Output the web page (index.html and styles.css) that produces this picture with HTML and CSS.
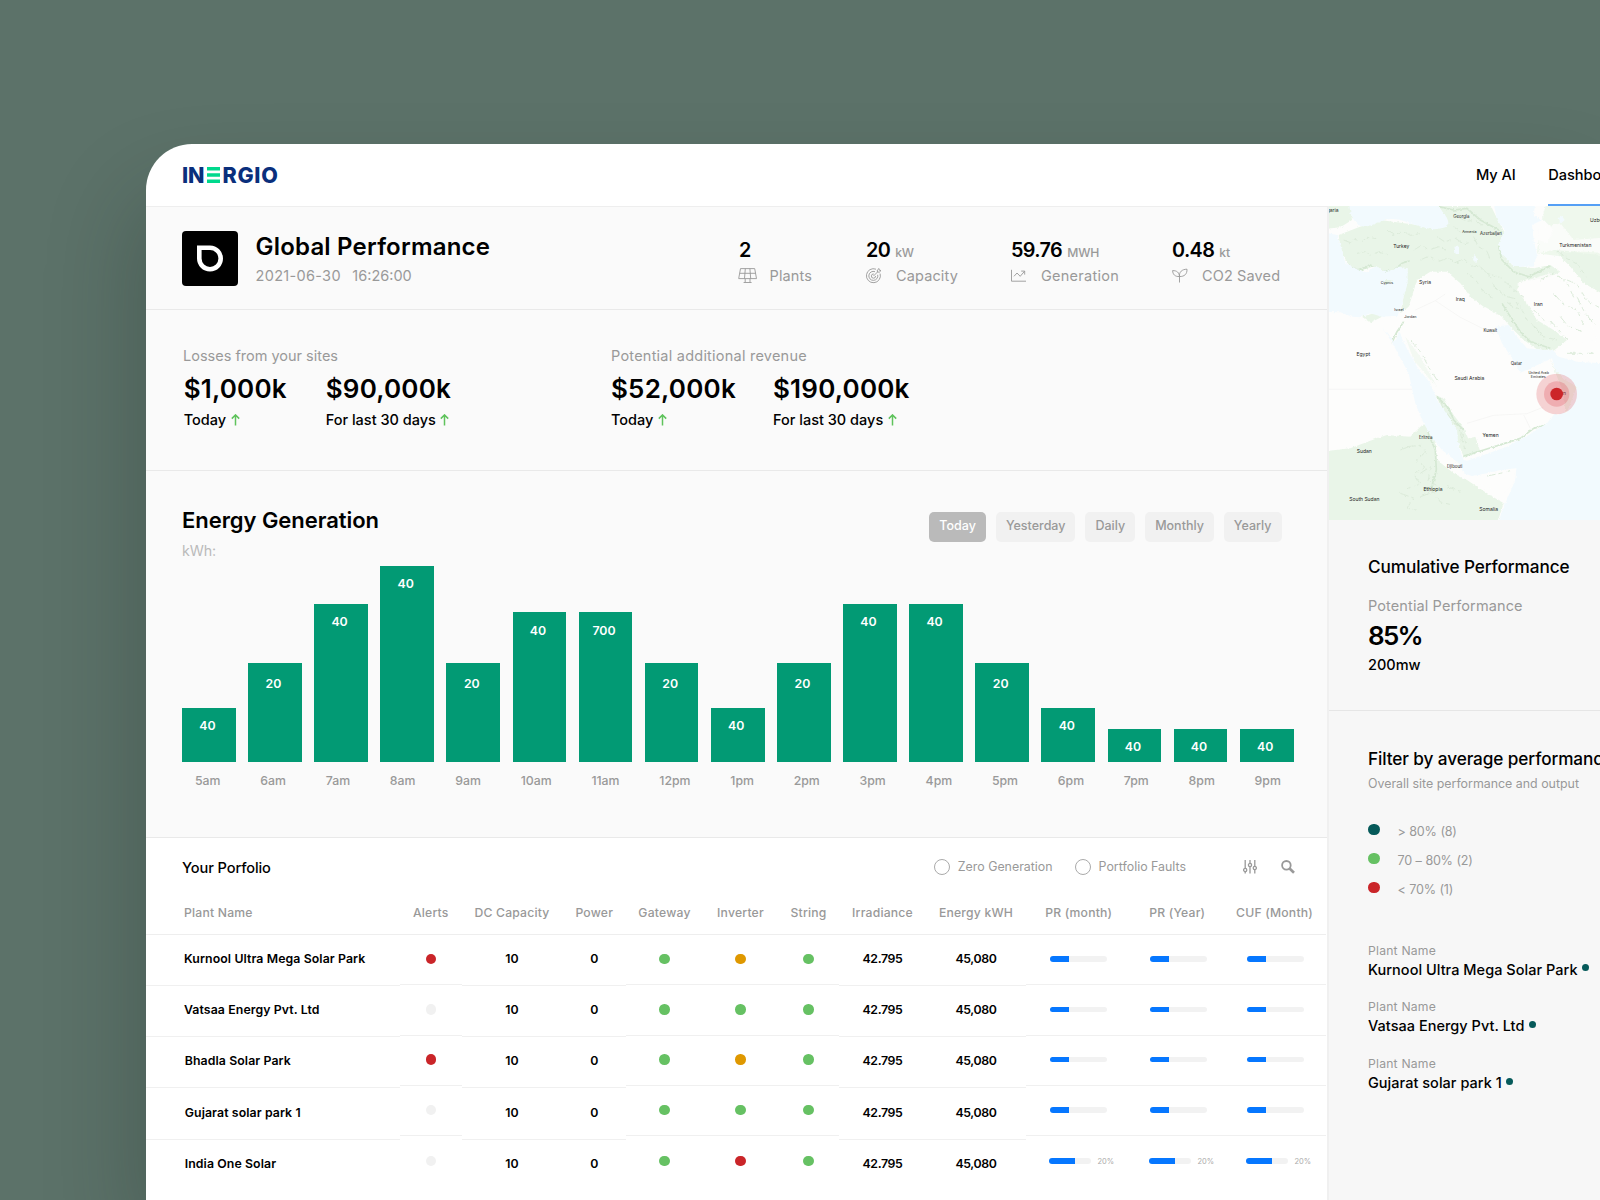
FILE: index.html
```html
<!DOCTYPE html>
<html lang="en">
<head>
<meta charset="utf-8">
<title>Inergio – Dashboard</title>
<link rel="stylesheet" href="styles.css">
</head>
<body>
<div class="window">
  <header class="topbar">
    <div class="logo" aria-label="Inergio"><span class="logo-in">IN</span><svg class="logo-e" width="13" height="16" viewBox="0 0 13 16"><path d="M0 0h13v3.6H0zM0 6.2h13v3.6H0zM0 12.4h13V16H0z" fill="#00d98d"/></svg><span class="logo-rgio">RGIO</span></div>
    <nav class="nav">
      <a class="nav-link">My AI</a>
      <a class="nav-link active">Dashboard</a>
    </nav>
  </header>
  <div class="content">
    <main class="main">
      <section class="hero">
        <div class="app-icon"><svg width="56" height="56" viewBox="0 0 56 56"><path d="M17.3 16.8H28a10.7 10.7 0 1 1-10.7 10.7z" fill="none" stroke="#fff" stroke-width="4.6"/></svg></div>
        <div class="hero-title">
          <h1>Global Performance</h1>
          <p class="stamp"><span class="date">2021-06-30</span><span>16:26:00</span></p>
        </div>
        <div class="stats">
          <div class="stat">
            <p class="stat-value"><b>2</b></p>
            <p class="stat-label"><svg width="20" height="16" viewBox="0 0 20 16"><path d="M2.5.6h14.2l1.8 10H.7zM1.7 5.3h15.9M7.3.6l-.8 10M11.9.6l.8 10M7.2 10.8v3.5M12 10.8v3.5M5.6 14.5h8"/></svg><span>Plants</span></p>
          </div>
          <div class="stat">
            <p class="stat-value"><b>20</b><i>kW</i></p>
            <p class="stat-label"><svg width="16" height="16" viewBox="0 0 16 16"><path d="M10 1.2A7 7 0 1 0 14.1 5.6M9 3.7A4.5 4.5 0 1 0 11.7 6.8M7.8 6A2.1 2.1 0 1 0 9.6 8M7.5 8l4-4M11.5 4l-.2-1.900L13 .5l.3 1.700 1.700.3-1.700 1.700z"/></svg><span>Capacity</span></p>
          </div>
          <div class="stat">
            <p class="stat-value"><b>59.76</b><i>MWH</i></p>
            <p class="stat-label"><svg width="16" height="16" viewBox="0 0 16 16"><path d="M.5 1.8v11.4h14.5M3 8.3l3-3.300 3.200 3.300L13.500 3.300M10.200 3.100h3.500v3.500"/></svg><span class="wide">Generation</span></p>
          </div>
          <div class="stat">
            <p class="stat-value"><b>0.48</b><i>kt</i></p>
            <p class="stat-label"><svg width="16" height="16" viewBox="0 0 16 16"><path d="M7.5 14.5V8.5C3 8.8.8 6.5.6 2.6 4.8 2.5 7.3 4.5 7.5 8.5 7 4 10 1.2 15 1.2 15.2 6 12.5 8.7 7.5 8.5"/></svg><span>CO2 Saved</span></p>
          </div>
        </div>
      </section>

      <section class="money">
        <div class="money-group g1">
          <p class="muted">Losses from your sites</p>
          <div class="money-row">
            <div><p class="amount">$1,000k</p><p class="when">Today<svg width="9" height="12" viewBox="0 0 9 12"><path d="M4.500 11.500V1M.8 4.600 4.500.9l3.700 3.700"/></svg></p></div>
            <div><p class="amount">$90,000k</p><p class="when">For last 30 days<svg width="9" height="12" viewBox="0 0 9 12"><path d="M4.500 11.500V1M.8 4.600 4.500.9l3.700 3.700"/></svg></p></div>
          </div>
        </div>
        <div class="money-group g2">
          <p class="muted wide">Potential additional revenue</p>
          <div class="money-row">
            <div><p class="amount">$52,000k</p><p class="when">Today<svg width="9" height="12" viewBox="0 0 9 12"><path d="M4.500 11.500V1M.8 4.600 4.500.9l3.700 3.700"/></svg></p></div>
            <div><p class="amount">$190,000k</p><p class="when">For last 30 days<svg width="9" height="12" viewBox="0 0 9 12"><path d="M4.500 11.500V1M.8 4.600 4.500.9l3.700 3.700"/></svg></p></div>
          </div>
        </div>
      </section>

      <section class="energy">
        <div class="energy-head">
          <div>
            <h2>Energy Generation</h2>
            <p class="unit">kWh:</p>
          </div>
          <div class="tabs">
            <button class="tab on">Today</button>
            <button class="tab">Yesterday</button>
            <button class="tab">Daily</button>
            <button class="tab">Monthly</button>
            <button class="tab">Yearly</button>
          </div>
        </div>
        <div class="bars">
          <div class="bar h1"><span>40</span></div>
          <div class="bar h2"><span>20</span></div>
          <div class="bar h4"><span>40</span></div>
          <div class="bar h5"><span>40</span></div>
          <div class="bar h2"><span>20</span></div>
          <div class="bar h3"><span>40</span></div>
          <div class="bar h3"><span>700</span></div>
          <div class="bar h2"><span>20</span></div>
          <div class="bar h1"><span>40</span></div>
          <div class="bar h2"><span>20</span></div>
          <div class="bar h4"><span>40</span></div>
          <div class="bar h4"><span>40</span></div>
          <div class="bar h2"><span>20</span></div>
          <div class="bar h1"><span>40</span></div>
          <div class="bar h0"><span>40</span></div>
          <div class="bar h0"><span>40</span></div>
          <div class="bar h0"><span>40</span></div>
        </div>
        <div class="hours"><span>5am</span><span>6am</span><span>7am</span><span>8am</span><span>9am</span><span>10am</span><span>11am</span><span>12pm</span><span>1pm</span><span>2pm</span><span>3pm</span><span>4pm</span><span>5pm</span><span>6pm</span><span>7pm</span><span>8pm</span><span>9pm</span></div>
      </section>

      <section class="portfolio">
        <div class="toolbar">
          <h3>Your Porfolio</h3>
          <div class="tools">
            <label class="radio r1"><i></i>Zero Generation</label>
            <label class="radio r2"><i></i>Portfolio Faults</label>
            <svg class="sliders" width="14" height="14" viewBox="0 0 14 14"><path d="M2.200 0v8M2.200 12v1.500M7 0v3M7 7v6.500M11.800 0v6M11.800 10v3.500"/><circle cx="2.200" cy="10" r="1.600"/><circle cx="7" cy="5" r="1.600"/><circle cx="11.800" cy="8" r="1.600"/></svg>
            <svg class="search" width="14" height="14" viewBox="0 0 14 14"><circle cx="5.400" cy="5.300" r="4.300"/><path class="handle" d="M8.600 8.500l4.400 4.300"/></svg>
          </div>
        </div>
        <div class="table">
          <div class="col c-name"><div class="th">Plant Name</div><div class="td">Kurnool Ultra Mega Solar Park</div><div class="td">Vatsaa Energy Pvt. Ltd</div><div class="td n1">Bhadla Solar Park</div><div class="td n1">Gujarat solar park 1</div><div class="td n1">India One Solar</div></div>
          <div class="col short c-alerts"><div class="th">Alerts</div><div class="td"><i class="dot red"></i></div><div class="td"><i class="dot off"></i></div><div class="td"><i class="dot red"></i></div><div class="td"><i class="dot off"></i></div><div class="td"><i class="dot off"></i></div></div>
          <div class="col c-dc"><div class="th">DC Capacity</div><div class="td">10</div><div class="td">10</div><div class="td">10</div><div class="td">10</div><div class="td">10</div></div>
          <div class="col c-power"><div class="th">Power</div><div class="td">0</div><div class="td">0</div><div class="td">0</div><div class="td">0</div><div class="td">0</div></div>
          <div class="col short c-gateway"><div class="th">Gateway</div><div class="td"><i class="dot green"></i></div><div class="td"><i class="dot green"></i></div><div class="td"><i class="dot green"></i></div><div class="td"><i class="dot green"></i></div><div class="td"><i class="dot green"></i></div></div>
          <div class="col short c-inverter"><div class="th">Inverter</div><div class="td"><i class="dot amber"></i></div><div class="td"><i class="dot green"></i></div><div class="td"><i class="dot amber"></i></div><div class="td"><i class="dot green"></i></div><div class="td"><i class="dot red"></i></div></div>
          <div class="col short c-string"><div class="th">String</div><div class="td"><i class="dot green"></i></div><div class="td"><i class="dot green"></i></div><div class="td"><i class="dot green"></i></div><div class="td"><i class="dot green"></i></div><div class="td"><i class="dot green"></i></div></div>
          <div class="col num c-irr"><div class="th">Irradiance</div><div class="td">42.795</div><div class="td">42.795</div><div class="td">42.795</div><div class="td">42.795</div><div class="td">42.795</div></div>
          <div class="col num c-kwh"><div class="th">Energy kWH</div><div class="td">45,080</div><div class="td">45,080</div><div class="td">45,080</div><div class="td">45,080</div><div class="td">45,080</div></div>
          <div class="col short c-prm"><div class="th">PR (month)</div><div class="td"><i class="meter"></i></div><div class="td"><i class="meter"></i></div><div class="td"><i class="meter"></i></div><div class="td"><i class="meter"></i></div><div class="td"><i class="meter small"></i><em>20%</em></div></div>
          <div class="col short c-pry"><div class="th">PR (Year)</div><div class="td"><i class="meter"></i></div><div class="td"><i class="meter"></i></div><div class="td"><i class="meter"></i></div><div class="td"><i class="meter"></i></div><div class="td"><i class="meter small"></i><em>20%</em></div></div>
          <div class="col short c-cuf"><div class="th">CUF (Month)</div><div class="td"><i class="meter"></i></div><div class="td"><i class="meter"></i></div><div class="td"><i class="meter"></i></div><div class="td"><i class="meter"></i></div><div class="td"><i class="meter small"></i><em>20%</em></div></div>
        </div>
      </section>
    </main>

    <aside class="side">
      <svg class="map" width="271" height="314" viewBox="26 198 813 942">
        <defs><filter id="rough" x="0" y="0" width="1" height="1"><feTurbulence type="fractalNoise" baseFrequency=".12" numOctaves="3" seed="4" result="n"/><feDisplacementMap in="SourceGraphic" in2="n" scale="9" xChannelSelector="R" yChannelSelector="G"/></filter></defs>
        <rect x="26" y="198" width="814" height="942" fill="#fdfdfc"/>
        <g filter="url(#rough)">
        <rect x="0" y="150" width="900" height="1040" fill="#fdfdfc"/>
        <g fill="#e9f5e8">
          <path d="M0 150H85L95 240 60 262 0 268z"/>
          <path d="M55 285 115 262 180 240 340 262 384 246 355 198 512 198 535 245 552 275 540 320 575 375 640 385 690 375 720 395 690 410 640 420 600 425 590 450 620 490 650 540 700 570 740 600 700 632 650 628 610 600 570 560 545 530 490 500 450 470 420 430 380 395 330 395 290 420 265 500 240 520 255 440 262 385 200 395 165 378 120 392 80 368 60 325z"/>
          <path d="M690 150H880V470L800 420 770 385 730 350 650 340 655 300 680 310 700 270 665 235z" opacity=".75"/>
          <path d="M700 330 790 340 880 350V480L790 430 750 380z"/>
          <path d="M0 935 90 925 170 895 200 885 270 890 300 860 320 850 345 900 350 960 400 1000 440 1020 500 1060 550 1090 520 1180H0z"/>
          <path d="M345 765 370 775 400 825 430 865 450 910 430 950 410 900 385 840z"/>
          <path d="M425 900 465 890 480 935 430 955z"/>
          <path d="M125 530 160 520 185 530 150 548z"/>
          <path d="M688 655 705 690 770 740 765 800 735 815 730 760z" opacity=".8"/>
          <path d="M255 590 300 650 350 740 330 720 280 660z" opacity=".5"/>
        </g>
        <g fill="#fdfdfc" opacity=".8"><path d="M590 430 690 400 750 440 800 520 830 600 770 610 720 560 650 540 615 480z"/><path d="M655 265 720 250 760 300 880 290 880 340 700 330 655 340z"/><path d="M440 1010 500 995 585 990 580 1030 550 1060 500 1040z"/></g>
        <g fill="none" stroke="#d5e8d3" stroke-width="5" stroke-linejoin="round">
          <path d="M85 375 115 392 150 375 185 392 215 395 245 370 268 362"/>
          <path d="M355 200 400 210 440 205 480 240 520 262 545 275"/>
          <path d="M535 320 545 360 580 395 625 410 690 378"/>
          <path d="M545 490 570 530 600 575 630 605 690 625"/>
          <path d="M350 770 385 805 400 840 430 870"/>
          <path d="M430 948 490 930 560 908 600 895 640 865 675 855"/>
          <path d="M320 850 325 885 345 930 348 990 335 1040 310 1050"/>
          <path d="M215 607 230 575 250 545"/>
        </g>
        <g fill="none" stroke="#dcebda" stroke-width="3" stroke-linejoin="round" stroke-dasharray="26 9 12 14">
          <path d="M70 300l20 8 12-10 24 6 14-12 30 4M110 340l28-6 10 12 26-10 28 8M200 270l20 14 30-10 20 12 34-6M280 330l24-14 22 14 30-10 26 14M350 290l24 16 30-12 26 18 24-6M300 360l26-12 30 16 26-10 34 16M400 370l30-14 24 22 28 2M460 290l14 30 26 14 12 30M440 400l26 20 20 32 34 24M480 380l30 30 14 34 34 26M520 440l30 20 20 36 36 14M500 400l44 14 30 30 40 30M600 500l20 40 34 30 16 30M640 510l34 34 24 6 44 50M660 420l40-22 40 30 20 44M700 460l30 34 40 16 20 44M770 470l24 50 30 34M740 420l30 12 30 50 36 20M710 330l30 26 30 16 30 40M640 560l30 30 40 10M560 470l24 6 10 24M720 530l24 30 40 14M740 640h80M410 230l30 14 24-4 30 22M400 260l20 16 34-4"/>
          <path d="M260 920l40-4 16 20-28 24 26 22-34 20 20 30-40 14M240 1060l40 14-20 30 40 10M300 1000l30-20-6 40 30 20-40 24M270 600l34 40 20 40 26 40M360 780l20 60 40 40 14 50M380 820l44 60 20 40M300 1070l40-14 20 30 40 10M240 930l30-12M380 1040l40 14M500 1008l40-8 30-8"/>
        </g>
        <g fill="#f2fafe">
          <path d="M85 150C85 225 95 240 120 258 150 265 180 240 210 237 250 236 290 262 340 268 370 266 385 262 384 248 382 228 365 215 352 198V150z"/>
          <path d="M0 275 50 285 62 320 75 368 118 392 140 397 165 378 200 395 235 380 262 385 262 430 245 490 232 527 185 530 150 520 120 532 95 530 60 517 0 516z"/>
          <path d="M185 562 222 607 238 575 250 608 290 680 330 730 350 780 385 830 410 870 415 920 430 960 440 962 560 920 625 885 680 850 700 825 740 815 770 740 735 720 705 690 695 655 640 680 600 698 575 655 545 610 525 560 565 555 590 590 620 625 700 632 715 650 770 665 880 672V1180H520L555 1090 585 1020 588 985 540 990 500 1000 455 1008 430 1000 415 970 365 930 330 885 305 840 285 790 265 700 235 645 215 607z"/>
          <path d="M512 150 530 240 555 270 535 310 545 345 580 378 640 380 650 345 640 300 635 255 665 240 640 225 650 150z"/>
          <path d="M715 235 725 228 733 240 722 250zM402 320h14v22h-10zM462 345 472 355 468 370 458 360z"/>
        </g>
        <path d="M190 420 215 420 205 432 192 430z" fill="#e9f5e8"/>
        </g>
        <path d="M26 748H275M285 510l60-28 30-20M345 482l75 50 100 50M440 850l80-24 100-5 50-20M610 825l20 40" fill="none" stroke="#f3f3f1" stroke-width="2"/>
        <g class="map-labels">
          <text x="37" y="217">garia</text><text class="m" x="423" y="235">Georgia</text><text class="s" x="447" y="279">Armenia</text><text class="m" x="512" y="285">Azerbaijan</text><text x="832" y="247">Uzbek</text><text x="243" y="324">Turkey</text><text x="765" y="321">Turkmenistan</text><text class="s" x="200" y="431">Cyprus</text><text x="314" y="433">Syria</text><text x="420" y="484">Iraq</text><text x="654" y="497">Iran</text><text class="s" x="236" y="513">Israel</text><text class="s" x="270" y="535">Jordan</text><text class="m" x="510" y="577">Kuwait</text><text x="129" y="648">Egypt</text><text class="m" x="588" y="675">Qatar</text><text class="s" x="655" y="703">United Arab</text><text class="s" x="654" y="714">Emirates</text><text x="447" y="721">Saudi Arabia</text><text x="716" y="766">Oman</text><text class="m" x="316" y="896">Eritrea</text><text x="511" y="891">Yemen</text><text x="132" y="938">Sudan</text><text class="m" x="403" y="983">Djibouti</text><text x="338" y="1053">Ethiopia</text><text x="132" y="1082">South Sudan</text><text x="505" y="1114">Somalia</text>
        </g>
        <circle cx="709" cy="762" r="61" fill="#dc3c46" opacity=".22"/>
        <circle cx="709" cy="762" r="38" fill="#dc3c46" opacity=".24"/>
        <circle cx="709" cy="762" r="19" fill="#cc2529"/>
      </svg>
      <section class="cumulative">
        <h4>Cumulative Performance</h4>
        <p class="muted">Potential Performance</p>
        <p class="amount">85%</p>
        <p class="when">200mw</p>
      </section>
      <section class="filter">
        <h4>Filter by average performance</h4>
        <p class="sub">Overall site performance and output</p>
        <ul class="legend">
          <li><i class="teal"></i>&gt; 80% (8)</li>
          <li><i class="green"></i>70 – 80% (2)</li>
          <li><i class="red"></i>&lt; 70% (1)</li>
        </ul>
        <ul class="plants">
          <li><small>Plant Name</small><p>Kurnool Ultra Mega Solar Park<i></i></p></li>
          <li><small>Plant Name</small><p>Vatsaa Energy Pvt. Ltd<i></i></p></li>
          <li><small>Plant Name</small><p>Gujarat solar park 1<i></i></p></li>
        </ul>
      </section>
    </aside>
  </div>
</div>
</body>
</html>
```
FILE: styles.css
```css
* { box-sizing: border-box; margin: 0; padding: 0; }
html, body { width: 1600px; height: 1200px; overflow: hidden; }
body { background: #5c7269; font-family: Inter, "Liberation Sans", sans-serif; color: #000; }
i, em { font-style: normal; }
ul { list-style: none; }
svg { display: block; flex: none; }

.window { margin: 144px 0 0 146px; width: 1454px; height: 1056px; background: #fff; border-top-left-radius: 46px; box-shadow: -12px 50px 90px rgba(20, 35, 30, .24); display: flex; flex-direction: column; }

/* Top bar */
.topbar { height: 62px; flex: none; display: flex; align-items: stretch; padding-left: 36px; }
.logo { display: flex; align-items: center; height: 62px; font-weight: 800; font-size: 21.5px; line-height: 24px; color: #0a2f7c; }
.logo-in { letter-spacing: -.1px; }
.logo-rgio { letter-spacing: .75px; }
.logo-e { margin: 0 2.5px 0 2.5px; }
.nav { margin-left: auto; width: 124px; display: flex; gap: 32.5px; overflow: hidden; }
.nav-link { flex: none; font-size: 14.6px; font-weight: 500; letter-spacing: -.05px; line-height: 63px; height: 62px; white-space: nowrap; }
.nav-link.active { line-height: 62px; border-bottom: 2px solid #559ff5; }

.content { flex: 1; display: flex; min-height: 0; }
.main { width: 1183px; flex: none; border-right: 2px solid #f0f0f0; border-top: 1px solid #eee; }

/* Hero */
.hero { height: 103px; background: #fafafa; border-bottom: 1px solid #e9e9e9; padding: 24px 0 0 36px; display: flex; align-items: flex-start; }
.app-icon { width: 56px; height: 55px; border-radius: 4px; background: #000; flex: none; }
.hero-title { width: 500px; padding: 1px 0 0 17.5px; flex: none; }
h1 { font-size: 24px; font-weight: 600; line-height: 30px; letter-spacing: .2px; }
.stamp { display: flex; gap: 11.5px; font-size: 14.5px; line-height: 28px; color: #999; }
.date { letter-spacing: .32px; }
.stats { display: grid; grid-template-columns: 128px 145px 161px auto; padding-top: 6px; }
.stat-value { display: flex; align-items: baseline; gap: 5px; line-height: 26px; height: 26px; }
.stat-value b { font-size: 19.8px; font-weight: 600; letter-spacing: -.6px; }
.stat:first-child .stat-value { padding-left: 1px; }
.stat-value i { font-size: 12.2px; font-weight: 500; letter-spacing: -.15px; color: #999; }
.stat-label { display: flex; align-items: center; gap: 14px; font-size: 14.5px; line-height: 25px; height: 25px; letter-spacing: .13px; color: #999; }
.stat-label .wide { letter-spacing: .26px; }
.stat:first-child .stat-label { gap: 11.5px; }
.stat-label svg { fill: none; stroke: #999; stroke-width: .9; }

/* Losses and revenue */
.money { height: 161px; background: #fafafa; border-bottom: 1px solid #e9e9e9; padding: 36px 0 0 37px; display: flex; }
.money-group { width: 428px; }
.muted { font-size: 14.5px; line-height: 20px; color: #999; }
.muted.wide { letter-spacing: .23px; }
.money-row { display: flex; margin-top: 5px; }
.g1 .money-row { padding-left: .7px; }
.g1 .money-row > div { width: 142px; }
.g2 .money-row > div { width: 162px; }
.amount { font-size: 26px; font-weight: 600; line-height: 36px; letter-spacing: .2px; white-space: nowrap; }
.when { display: flex; align-items: center; gap: 4.5px; margin-top: 2.5px; font-size: 14.5px; font-weight: 500; line-height: 20px; white-space: nowrap; }
.when svg { fill: none; stroke: #5fc35c; stroke-width: 1.5; }

/* Energy chart */
.energy { height: 367px; background: #fafafa; border-bottom: 1px solid #e9e9e9; padding: 34px 33.5px 0 36px; }
.energy-head { display: flex; justify-content: space-between; height: 61px; }
h2 { font-size: 22px; font-weight: 600; line-height: 30px; letter-spacing: -.05px; }
.unit { margin-top: 6px; font-size: 14.3px; line-height: 20px; letter-spacing: -.15px; color: #bbb; }
.tabs { display: flex; gap: 10px; margin: 7px 12px 0 0; height: 30px; }
.tab { border: 0; border-radius: 5px; padding: 0 10px 3px; background: #f1f1f1; color: #999; font: 500 12.5px/27px Inter, sans-serif; }
.tab.on { background: #bababa; color: #fff; }
.bars { display: grid; grid-template-columns: repeat(17, 1fr); column-gap: 12.4px; align-items: end; height: 196px; }
.bar { background: #029a74; color: #fff; text-align: center; font-size: 12.3px; font-weight: 600; line-height: 16px; padding: 10px 3px 0 0; }
.h0 { height: 33px; } .h1 { height: 54px; } .h2 { height: 99px; padding-top: 13px; } .h3 { height: 150px; padding-top: 11px; } .h4 { height: 158px; } .h5 { height: 196px; }
.hours { display: flex; justify-content: space-between; margin: 9px 12.5px 0 13px; font-size: 12.3px; font-weight: 500; line-height: 20px; color: #999; }

/* Portfolio */
.portfolio { background: #fff; }
.toolbar { height: 60px; padding: 0 32px 0 36px; display: flex; justify-content: space-between; align-items: center; }
h3 { font-size: 14.6px; font-weight: 500; line-height: 20px; letter-spacing: -.1px; }
.tools { display: flex; align-items: center; height: 56px; margin-bottom: 3px; }
.radio { display: flex; align-items: center; gap: 8px; font-size: 12.4px; color: #999; white-space: nowrap; line-height: 16px; }
.radio i { width: 16px; height: 16px; border: 1px solid #aaa; border-radius: 50%; }
.radio.r1 { margin-right: 22px; }
.radio.r2 { margin-right: 57px; }
.sliders, .search { fill: none; stroke: #999; stroke-width: 1.3; }
.search { margin-left: 24px; stroke-width: 1.8; }
.handle { stroke-width: 2.6; }
.table { display: flex; width: 1180px; }
.col { flex: none; text-align: center; }
.th { height: 37px; padding-bottom: 6px; line-height: 30px; border-bottom: 1px solid #eee; font-size: 12.2px; font-weight: 500; letter-spacing: .2px; color: #999; white-space: nowrap; }
.td { height: 51.17px; padding-bottom: 3px; display: flex; align-items: center; justify-content: center; border-bottom: 1px solid #f0f0f0; font-size: 12.3px; font-weight: 600; letter-spacing: .1px; white-space: nowrap; }
.num .td { letter-spacing: -.35px; }
.short .td { height: 50.3px; padding-bottom: 1px; }
.td:last-child { border-bottom: 0; }
.c-name { width: 254px; text-align: left; }
.c-name .th { padding-left: 38px; }
.c-name .td { padding-left: 38px; justify-content: flex-start; }
.c-name .td.n1 { padding-left: 38.7px; }
.c-alerts { width: 61.5px; } .c-dc { width: 101px; } .c-power { width: 63.5px; } .c-gateway { width: 77px; } .c-inverter { width: 75px; } .c-string { width: 61px; } .c-irr { width: 87px; } .c-kwh { width: 100px; } .c-prm { width: 105.5px; } .c-pry { width: 91.5px; } .c-cuf { width: 103px; }
.dot { width: 10.5px; height: 10.5px; border-radius: 50%; }
.red { background: #ca2529; } .off { background: #f1f1f1; } .green { background: #66c163; } .amber { background: #df9800; } .teal { background: #065a5a; }
.meter { width: 57px; height: 5.5px; border-radius: 3px; background: linear-gradient(90deg, #0677ff 19px, #f2f2f2 19px); }
.meter.small { width: 42px; margin-left: -1px; background: linear-gradient(90deg, #0677ff 26px, #f2f2f2 26px); }
.short .td em { width: 15px; margin: 3px 0 0 7px; font-size: 7.5px; line-height: 8px; font-weight: 400; color: #aaa; letter-spacing: 0; }
.c-prm .td { padding-left: 23.5px; justify-content: flex-start; }
.c-pry .td { padding-left: 18px; justify-content: flex-start; }
.c-cuf .td { padding-left: 23.5px; justify-content: flex-start; }

/* Sidebar */
.side { flex: 1; background: #f7f7f7; overflow: hidden; white-space: nowrap; }
.map-labels text { font-size: 15px; text-anchor: middle; fill: #222; }
.map-labels .m { font-size: 13px; }
.map-labels .s { font-size: 11px; }
.cumulative { height: 190.5px; padding: 36px 0 0 39px; border-bottom: 1px solid #e6e6e6; }
h4 { font-size: 17.2px; font-weight: 500; line-height: 22px; letter-spacing: -.1px; }
.cumulative .muted { margin-top: 18px; letter-spacing: .11px; }
.cumulative .amount { margin-top: 2px; font-size: 26px; letter-spacing: -1.7px; }
.cumulative .when { margin-top: .5px; }
.filter { padding: 37px 0 0 39px; }
.sub { margin-top: 5px; font-size: 12.4px; line-height: 18px; color: #999; }
.legend { margin-top: 24px; }
.legend li { display: flex; align-items: center; height: 29px; font-size: 12.6px; letter-spacing: -.3px; word-spacing: .6px; color: #999; }
.legend i { width: 11.5px; height: 11.5px; border-radius: 50%; margin: 0 18px 3px 0; }
.plants { margin-top: 39.4px; }
.plants li { height: 56.6px; }
.plants small { display: block; font-size: 12.2px; line-height: 16px; letter-spacing: .2px; color: #999; }
.plants p { display: flex; align-items: center; font-size: 14.5px; font-weight: 500; line-height: 22px; letter-spacing: .03px; }
.plants p i { width: 7px; height: 7px; border-radius: 50%; background: #065a5a; margin: 0 0 4px 4.5px; }
```
